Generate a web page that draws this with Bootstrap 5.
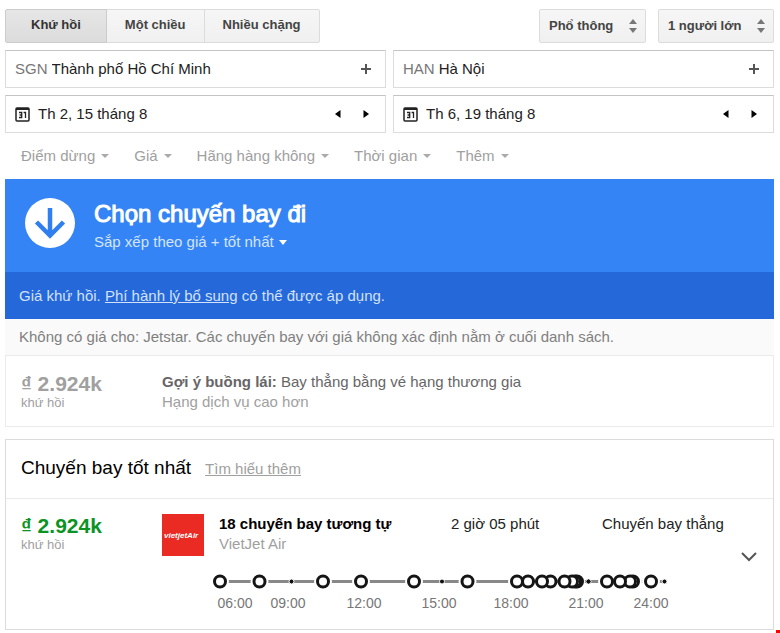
<!DOCTYPE html>
<html lang="vi">
<head>
<meta charset="utf-8">
<meta name="viewport" content="width=device-width, initial-scale=1">
<title>Chọn chuyến bay đi</title>
<link href="https://cdn.jsdelivr.net/npm/bootstrap@5.3.0/dist/css/bootstrap.min.css" rel="stylesheet">
<style>
body{font-family:"Liberation Sans",Arial,sans-serif;font-size:15px;line-height:20px;color:#222;background:#fff}
.page{padding:9px 6px 0 5px}
.tab-set .btn,.picker{font-size:13px;font-weight:700;line-height:18px;color:#444;background:linear-gradient(#f6f6f6,#f0f0f0);border:1px solid #dcdcdc;border-radius:2px;height:34px}
.tab-set .btn{padding:6px 18px}
.tab-set .btn:nth-of-type(1){padding:6px 25px}
.tab-set .btn-check:checked+.btn{color:#333;background:linear-gradient(#e6e6e6,#dcdcdc);border-color:#ccc}
.picker-box{position:relative}
.picker{appearance:none;padding:0 31px 0 9px}
.picker-box svg{position:absolute;right:9px;top:10px;pointer-events:none}
.top-bar{margin-bottom:7px}
.trip-grid{--bs-gutter-x:7px;--bs-gutter-y:7px}
.field{height:38px;border:1px solid #dcdcdc;border-top-color:#c4c4c4;padding:0 5px 0 9px}
.field input{border:0;padding:0;min-width:0;color:#222;background:transparent;outline:0}
.code{color:#777}
.bare{border:0;background:transparent;padding:0;color:inherit;line-height:20px;display:inline-flex;align-items:center}
.step{width:28px;height:28px;justify-content:center;flex:none}
.filters{padding:13px 16px;gap:25px;color:#a0a0a0}
.filters .bare{gap:6px}
.hero{background:#3484f6;padding:19px 20px 20px;gap:19px;color:#fff}
.hero h1{font-size:24px;line-height:32px;font-weight:400;margin:0 0 2px;-webkit-text-stroke:1px #fff}
.sort{gap:5px;color:#d5e4fc}
.fees{background:#2468da;color:#d3e1f9;padding:14px 14px 13px}
.fees a{color:inherit}
.notice{background:#fafafa;color:#808080;padding:8px 14px}
.panel{border:1px solid #dcdcdc}
.panel.tip{border-color:#ebebeb;padding:16px 15px 14px;color:#666;margin-bottom:12px}
.price-col{width:141px;flex:none}
.price{font-size:21px;line-height:24px;font-weight:700}
.fare{color:#0b9424}
.per{font-size:13px;line-height:14px;color:#a0a0a0}
.soft{color:#a0a0a0}
.best-head{padding:18px 15px 19px;border-bottom:1px solid #ebebeb;gap:14px}
.best-head h2{font-size:19px;line-height:20px;margin:0;font-weight:400;color:#000}
.best-row{padding:15px 11px 16px 15px}
.flight{margin-left:15px}
.name-col{width:232px}
.stay-col{width:151px}
.toggle{width:26px;height:26px;justify-content:center;margin-top:30px}
.timeline{margin-left:-9px;margin-top:17px}
.corner{width:4px;height:4px;background:#f00}
</style>
<script src="https://cdn.jsdelivr.net/npm/bootstrap@5.3.0/dist/js/bootstrap.bundle.min.js"></script>
</head>
<body>
<main class="page">
  <form>
    <div class="top-bar d-flex justify-content-between">
      <div class="btn-group tab-set" role="group" aria-label="Loại hành trình">
        <input type="radio" class="btn-check" name="trip" id="t1" checked><label class="btn" for="t1">Khứ hồi</label>
        <input type="radio" class="btn-check" name="trip" id="t2"><label class="btn" for="t2">Một chiều</label>
        <input type="radio" class="btn-check" name="trip" id="t3"><label class="btn" for="t3">Nhiều chặng</label>
      </div>
      <div class="d-flex" style="gap:12px">
        <div class="picker-box">
          <select class="picker" aria-label="Hạng ghế"><option>Phổ thông</option></select>
          <svg width="8" height="14" fill="#777"><path d="M0 5L4 0L8 5ZM0 9L4 14L8 9Z"/></svg>
        </div>
        <div class="picker-box">
          <select class="picker" aria-label="Hành khách"><option>1 người lớn</option></select>
          <svg width="8" height="14" fill="#777"><path d="M0 5L4 0L8 5ZM0 9L4 14L8 9Z"/></svg>
        </div>
      </div>
    </div>
    <div class="row row-cols-2 trip-grid">
      <div class="col"><div class="field d-flex align-items-center gap-1">
        <label class="code" for="from">SGN</label><input class="flex-grow-1" id="from" value="Thành phố Hồ Chí Minh">
        <button type="button" class="bare step" aria-label="Thêm điểm đi"><svg width="10" height="10" stroke="#555" stroke-width="2"><path d="M0 5H10M5 0V10"/></svg></button>
      </div></div>
      <div class="col"><div class="field d-flex align-items-center gap-1">
        <label class="code" for="to">HAN</label><input class="flex-grow-1" id="to" value="Hà Nội">
        <button type="button" class="bare step" aria-label="Thêm điểm đến"><svg width="10" height="10" stroke="#555" stroke-width="2"><path d="M0 5H10M5 0V10"/></svg></button>
      </div></div>
      <div class="col"><div class="field d-flex align-items-center">
        <label class="d-flex me-2" for="out" aria-label="Ngày đi"><svg width="15" height="15"><rect x="1" y="1" width="13" height="13" rx="1" fill="none" stroke="#222" stroke-width="1.5"/><path d="M1 2H14" stroke="#222" stroke-width="2"/><path d="M4 5.500H6.700V10.500H4M4.600 8H6.700M8.600 5.500H10.500V11" fill="none" stroke="#222" stroke-width="1.3"/></svg></label><input class="flex-grow-1" id="out" value="Th 2, 15 tháng 8">
        <button type="button" class="bare step" aria-label="Ngày trước"><svg width="6" height="8"><path d="M5.500 0V8L0 4Z"/></svg></button>
        <button type="button" class="bare step" aria-label="Ngày sau"><svg width="6" height="8"><path d="M.5 0V8L6 4Z"/></svg></button>
      </div></div>
      <div class="col"><div class="field d-flex align-items-center">
        <label class="d-flex me-2" for="back" aria-label="Ngày về"><svg width="15" height="15"><rect x="1" y="1" width="13" height="13" rx="1" fill="none" stroke="#222" stroke-width="1.5"/><path d="M1 2H14" stroke="#222" stroke-width="2"/><path d="M4 5.500H6.700V10.500H4M4.600 8H6.700M8.600 5.500H10.500V11" fill="none" stroke="#222" stroke-width="1.3"/></svg></label><input class="flex-grow-1" id="back" value="Th 6, 19 tháng 8">
        <button type="button" class="bare step" aria-label="Ngày trước"><svg width="6" height="8"><path d="M5.500 0V8L0 4Z"/></svg></button>
        <button type="button" class="bare step" aria-label="Ngày sau"><svg width="6" height="8"><path d="M.5 0V8L6 4Z"/></svg></button>
      </div></div>
    </div>
    <div class="filters d-flex">
      <button type="button" class="bare">Điểm dừng<svg width="8" height="4" fill="#aaa"><path d="M0 0H8L4 4Z"/></svg></button>
      <button type="button" class="bare">Giá<svg width="8" height="4" fill="#aaa"><path d="M0 0H8L4 4Z"/></svg></button>
      <button type="button" class="bare">Hãng hàng không<svg width="8" height="4" fill="#aaa"><path d="M0 0H8L4 4Z"/></svg></button>
      <button type="button" class="bare">Thời gian<svg width="8" height="4" fill="#aaa"><path d="M0 0H8L4 4Z"/></svg></button>
      <button type="button" class="bare">Thêm<svg width="8" height="4" fill="#aaa"><path d="M0 0H8L4 4Z"/></svg></button>
    </div>
  </form>

  <section>
    <div class="hero d-flex align-items-start">
      <svg width="50" height="50" class="flex-shrink-0"><circle cx="25" cy="25" r="25" fill="#fff"/><path d="M25 10V37M11.500 24L25 37.500L38.500 24" fill="none" stroke="#2f7ff0" stroke-width="4.500"/></svg>
      <div>
        <h1>Chọn chuyến bay đi</h1>
        <button type="button" class="bare sort">Sắp xếp theo giá + tốt nhất<svg width="8" height="5" fill="#fff"><path d="M0 0H8L4 5Z"/></svg></button>
      </div>
    </div>
    <div class="fees">Giá khứ hồi. <a href="#">Phí hành lý bổ sung</a> có thể được áp dụng.</div>
    <div class="notice">Không có giá cho: Jetstar. Các chuyến bay với giá không xác định nằm ở cuối danh sách.</div>
    <div class="panel tip d-flex">
      <div class="price-col"><div class="price soft">₫ 2.924k</div><div class="per">khứ hồi</div></div>
      <div><div><b>Gợi ý buồng lái:</b> Bay thẳng bằng vé hạng thương gia</div><div class="soft">Hạng dịch vụ cao hơn</div></div>
    </div>
  </section>

  <section class="panel">
    <div class="best-head d-flex align-items-baseline"><h2>Chuyến bay tốt nhất</h2><a href="#" class="soft">Tìm hiểu thêm</a></div>
    <div class="best-row d-flex align-items-start">
      <div class="price-col"><div class="price fare">₫ 2.924k</div><div class="per">khứ hồi</div></div>
      <svg class="flex-shrink-0" width="42" height="42" role="img" aria-label="VietJet Air"><rect width="42" height="42" fill="#e92b24"/><text x="2" y="24" font-size="8" font-weight="700" font-style="italic" fill="#fff">vietjetAir</text></svg>
      <div class="flex-grow-1 flight">
        <div class="d-flex">
          <div class="name-col"><b class="text-black">18 chuyến bay tương tự</b><div class="soft">VietJet Air</div></div>
          <div class="stay-col">2 giờ 05 phút</div>
          <div>Chuyến bay thẳng</div>
        </div>
        <svg class="timeline d-block" width="460" height="42" viewBox="210 570 460 42" role="img" aria-label="Giờ khởi hành">
          <path d="M220 580.500H665" stroke="#888" stroke-width="3"/>
          <g fill="#111" stroke="#fff" stroke-width="1"><circle cx="291.500" cy="580.500" r="2.500"/><circle cx="442" cy="580.500" r="2.500"/><circle cx="588.500" cy="580.500" r="2.500"/><circle cx="664.500" cy="580.500" r="2.500"/></g>
          <g fill="#fff"><circle cx="220" cy="580.500" r="9"/><circle cx="259.500" cy="580.500" r="9"/><circle cx="323" cy="580.500" r="9"/><circle cx="361" cy="580.500" r="9"/><circle cx="414" cy="580.500" r="9"/><circle cx="467.500" cy="580.500" r="9"/><circle cx="517" cy="580.500" r="9"/><circle cx="576" cy="580.500" r="9"/><circle cx="607" cy="580.500" r="9"/><circle cx="633" cy="580.500" r="9"/><circle cx="651" cy="580.500" r="9"/></g>
          <g fill="#111"><circle cx="588.500" cy="580.500" r="2"/></g>
          <g fill="#fff" stroke="#151515" stroke-width="3"><circle cx="651" cy="580.500" r="5.500"/><circle cx="633" cy="580.500" r="5.500"/><circle cx="630" cy="580.500" r="5.500"/><circle cx="620" cy="580.500" r="5.500"/><circle cx="607" cy="580.500" r="5.500"/><circle cx="577" cy="580.500" r="5.500"/><circle cx="575" cy="580.500" r="5.500"/><circle cx="572" cy="580.500" r="5.500"/><circle cx="564.500" cy="580.500" r="5.500"/><circle cx="550.500" cy="580.500" r="5.500"/><circle cx="542" cy="580.500" r="5.500"/><circle cx="528" cy="580.500" r="5.500"/><circle cx="517" cy="580.500" r="5.500"/><circle cx="467.500" cy="580.500" r="5.500"/><circle cx="414" cy="580.500" r="5.500"/><circle cx="361" cy="580.500" r="5.500"/><circle cx="323" cy="580.500" r="5.500"/><circle cx="259.500" cy="580.500" r="5.500"/><circle cx="220" cy="580.500" r="5.500"/></g>
          <g font-size="14" fill="#777" text-anchor="middle"><text x="235" y="607">06:00</text><text x="288" y="607">09:00</text><text x="364" y="607">12:00</text><text x="439" y="607">15:00</text><text x="511" y="607">18:00</text><text x="586" y="607">21:00</text><text x="651" y="607">24:00</text></g>
        </svg>
      </div>
      <button type="button" class="bare toggle" aria-label="Xem chi tiết"><svg width="16" height="10" fill="none" stroke="#555" stroke-width="2"><path d="M1 1L8 8L15 1"/></svg></button>
    </div>
  </section>
</main>
<div class="d-flex justify-content-end"><div class="corner"></div></div>
</body>
</html>
